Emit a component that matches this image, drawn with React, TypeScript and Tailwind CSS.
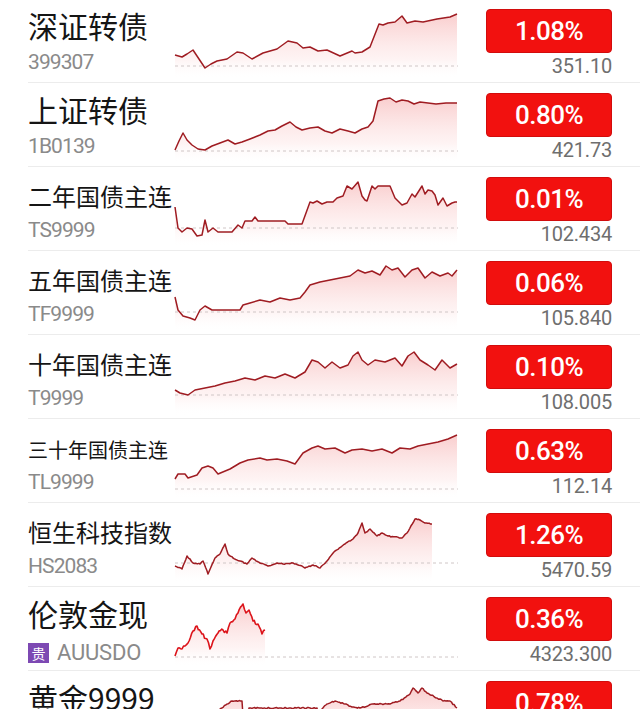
type Pt = [number, number]

interface Quote {
  name: string
  nameSize: string
  code: string
  tag?: string
  change: string
  price: string
  base: number
  pts: Pt[]
  jitter?: number
  bright?: boolean
}

// points: [absolute screen x, y offset from the row top]
const quotes: Quote[] = [
  {
    name: '深证转债', nameSize: 'text-[30px]', code: '399307', change: '1.08%', price: '351.10', base: 67,
    pts: [[175, 56], [182, 58], [187, 55], [193, 51], [199, 60], [205, 69], [211, 65], [217, 62], [227, 60], [237, 53], [243, 54], [252, 60], [263, 54], [277, 50], [288, 42], [297, 44], [303, 49], [310, 48], [318, 52], [327, 51], [340, 57], [352, 52], [355, 54], [362, 53], [370, 48], [379, 25], [383, 26], [388, 24], [395, 23], [402, 17], [407, 24], [415, 22], [423, 23], [437, 20], [450, 18], [457, 15]],
  },
  {
    name: '上证转债', nameSize: 'text-[30px]', code: '1B0139', change: '0.80%', price: '421.73', base: 68,
    pts: [[175, 67], [179, 58], [183, 50], [187, 57], [192, 62], [198, 66], [205, 67], [212, 63], [220, 60], [228, 57], [235, 61], [242, 59], [250, 56], [260, 52], [268, 48], [275, 47], [282, 43], [290, 39], [296, 44], [302, 47], [310, 45], [318, 44], [325, 48], [332, 50], [340, 46], [348, 48], [355, 50], [362, 46], [368, 44], [373, 38], [378, 18], [384, 16], [390, 15], [396, 19], [402, 17], [408, 18], [414, 21], [420, 19], [428, 20], [436, 21], [446, 20], [457, 20]],
  },
  {
    name: '二年国债主连', nameSize: 'text-[24px]', code: 'TS9999', change: '0.01%', price: '102.434', base: 61,
    pts: [[175, 40], [178, 61], [182, 65], [187, 61], [192, 62], [197, 69], [202, 68], [205, 53], [208, 65], [213, 61], [218, 65], [232, 65], [238, 58], [242, 61], [245, 54], [252, 54], [255, 50], [258, 54], [285, 54], [288, 57], [302, 57], [310, 35], [313, 36], [317, 34], [322, 37], [327, 35], [333, 35], [337, 31], [343, 29], [347, 19], [352, 22], [358, 15], [362, 29], [365, 33], [367, 34], [372, 19], [375, 22], [378, 19], [390, 19], [395, 31], [402, 38], [407, 36], [412, 27], [415, 30], [422, 19], [425, 27], [428, 23], [432, 24], [435, 28], [438, 38], [443, 31], [447, 39], [452, 36], [455, 35], [457, 35]],
  },
  {
    name: '五年国债主连', nameSize: 'text-[24px]', code: 'TF9999', change: '0.06%', price: '105.840', base: 61,
    pts: [[175, 46], [178, 59], [183, 65], [190, 67], [195, 69], [200, 59], [205, 55], [212, 59], [240, 59], [243, 54], [250, 52], [260, 49], [270, 51], [280, 47], [290, 49], [300, 47], [305, 41], [310, 34], [320, 31], [330, 29], [340, 27], [350, 25], [358, 19], [365, 22], [372, 20], [380, 24], [386, 15], [392, 19], [398, 17], [405, 26], [412, 19], [418, 17], [425, 27], [432, 21], [440, 25], [448, 22], [452, 25], [457, 19]],
  },
  {
    name: '十年国债主连', nameSize: 'text-[24px]', code: 'T9999', change: '0.10%', price: '108.005', base: 60,
    pts: [[175, 55], [180, 58], [188, 60], [195, 55], [205, 53], [215, 51], [225, 48], [235, 46], [245, 43], [255, 45], [265, 41], [275, 43], [285, 39], [295, 43], [305, 37], [312, 25], [318, 27], [325, 33], [332, 27], [340, 33], [348, 30], [353, 21], [358, 17], [362, 25], [368, 30], [375, 25], [385, 27], [395, 23], [402, 31], [408, 21], [414, 17], [420, 25], [428, 30], [435, 35], [442, 25], [450, 33], [457, 29]],
  },
  {
    name: '三十年国债主连', nameSize: 'text-[20px]', code: 'TL9999', change: '0.63%', price: '112.14', base: 70,
    pts: [[175, 60], [178, 55], [185, 55], [188, 59], [197, 56], [202, 49], [208, 47], [213, 49], [218, 55], [230, 50], [240, 44], [248, 41], [260, 39], [267, 41], [277, 40], [287, 42], [295, 45], [303, 34], [312, 29], [318, 27], [325, 30], [335, 29], [345, 34], [352, 31], [362, 30], [372, 32], [382, 30], [392, 34], [400, 29], [410, 30], [418, 27], [428, 25], [438, 23], [448, 20], [457, 16]],
  },
  {
    name: '恒生科技指数', nameSize: 'text-[24px]', code: 'HS2083', change: '1.26%', price: '5470.59', base: 60, jitter: 1,
    pts: [[175, 63], [182, 66], [187, 53], [193, 60], [200, 61], [203, 58], [208, 71], [215, 55], [220, 51], [225, 41], [228, 51], [233, 55], [240, 58], [247, 61], [252, 55], [260, 60], [268, 63], [277, 60], [283, 61], [293, 60], [302, 63], [305, 65], [313, 62], [320, 65], [327, 58], [335, 48], [345, 41], [353, 36], [358, 30], [362, 20], [365, 30], [370, 26], [377, 33], [382, 30], [388, 33], [402, 35], [407, 30], [415, 16], [420, 17], [425, 20], [432, 21]],
  },
  {
    name: '伦敦金现', nameSize: 'text-[30px]', code: 'AUUSDO', tag: '贵', change: '0.36%', price: '4323.300', base: 70, jitter: 3.5, bright: true,
    pts: [[175, 69], [178, 61], [182, 62], [185, 59], [188, 56], [193, 44], [197, 39], [202, 47], [207, 52], [210, 62], [213, 54], [218, 46], [223, 43], [227, 46], [230, 36], [235, 32], [238, 26], [243, 17], [246, 26], [249, 23], [253, 34], [258, 37], [262, 47], [265, 43]],
  },
  {
    name: '黄金9999', nameSize: 'text-[30px]', code: 'AU9999', change: '0.78%', price: '1021.50', base: 60, jitter: 1.2,
    pts: [[175, 55], [190, 50], [205, 46], [215, 42], [222, 37], [227, 33], [232, 30], [242, 30], [243, 45], [248, 45], [249, 37], [317, 37], [318, 44], [322, 38], [327, 33], [335, 30], [345, 33], [352, 36], [360, 37], [373, 33], [390, 33], [400, 30], [410, 23], [413, 17], [418, 22], [422, 17], [427, 22], [437, 27], [443, 30], [450, 30], [457, 37]],
  },
]

function densify(pts: Pt[], seed: number, amp: number): Pt[] {
  let s = seed
  const rnd = () => {
    s = (s * 9301 + 49297) % 233280
    return s / 233280
  }
  const out: Pt[] = []
  for (let i = 0; i < pts.length - 1; i++) {
    const [x0, y0] = pts[i]
    const [x1, y1] = pts[i + 1]
    const n = Math.max(1, Math.round((x1 - x0) / 1.4))
    for (let k = 0; k < n; k++) {
      const t = k / n
      const j = k === 0 ? 0 : (rnd() - 0.5) * amp
      out.push([x0 + (x1 - x0) * t, y0 + (y1 - y0) * t + j])
    }
  }
  out.push(pts[pts.length - 1])
  return out
}

function Spark({ q, idx }: { q: Quote; idx: number }) {
  const pts = q.jitter ? densify(q.pts, idx * 977 + 13, q.jitter) : q.pts
  const xy = pts.map(([x, y]) => [x - 174, y] as Pt)
  const line = xy.map(([x, y], i) => `${i ? 'L' : 'M'}${x.toFixed(1)} ${y.toFixed(1)}`).join(' ')
  const bottom = 80
  const area = `${line} L${xy[xy.length - 1][0].toFixed(1)} ${bottom} L${xy[0][0].toFixed(1)} ${bottom} Z`
  const minY = Math.min(...xy.map(p => p[1]))
  const gid = `fill-${idx}`
  return (
    <svg className="h-[84px] w-[284px] shrink-0" viewBox="0 0 284 84">
      <defs>
        <linearGradient id={gid} gradientUnits="userSpaceOnUse" x1="0" y1={minY} x2="0" y2={bottom}>
          <stop offset="0" stopColor="#ec5a5a" stopOpacity="0.3" />
          <stop offset="0.7" stopColor="#f6a0a0" stopOpacity="0.12" />
          <stop offset="1" stopColor="#ffffff" stopOpacity="0" />
        </linearGradient>
      </defs>
      <path d={area} fill={`url(#${gid})`} />
      <line x1="1" x2="284" y1={q.base} y2={q.base} stroke="#cfc6c6" strokeWidth="1" strokeDasharray="3 3" />
      <path
        d={line}
        fill="none"
        stroke={q.bright ? '#dc141b' : '#9f1c22'}
        strokeWidth={q.bright ? 1.6 : 1.5}
        strokeLinejoin="round"
      />
    </svg>
  )
}

function Row({ q, idx }: { q: Quote; idx: number }) {
  return (
    <div className={`ml-7 flex h-[84px] border-b border-[#ececec] pr-7 ${idx === 0 ? '-mt-px' : ''}`}>
      <div className="w-[146px] shrink-0">
        <div className="flex h-[41px] items-end">
          <span
            className={`${q.nameSize} whitespace-nowrap leading-none text-[#151515]`}
            style={{ fontFamily: '"Noto Sans CJK SC", sans-serif' }}
          >
            {q.name}
          </span>
        </div>
        <div className="mt-3 flex h-[21px] items-center gap-2">
          {q.tag && (
            <span
              className="mt-1 flex h-5 w-[21px] items-center justify-center bg-[#7d49b3] text-[14px] leading-none text-white"
              style={{ fontFamily: '"Noto Sans CJK SC", sans-serif' }}
            >
              {q.tag}
            </span>
          )}
          {q.tag ? (
            <span className="mt-1 font-['Roboto',sans-serif] text-[22px] leading-none tracking-[-0.2px] text-[#8a8a8a]">
              {q.code}
            </span>
          ) : (
            <span className="font-['Roboto',sans-serif] text-[21px] leading-none tracking-[-0.9px] text-[#8a8a8a]">
              {q.code}
            </span>
          )}
        </div>
      </div>
      <Spark q={q} idx={idx} />
      <div className="ml-7 flex w-[126px] shrink-0 flex-col items-end pt-[10px]">
        <div className="flex h-[44px] w-full items-center justify-center rounded-[4px] border border-[#d20c0c] bg-[#f2110f]">
          <span className="font-['Roboto',sans-serif] text-[26px] font-medium leading-none tracking-[-0.5px] text-white">
            {q.change}
          </span>
        </div>
        <span className="mt-[3px] font-['Roboto',sans-serif] text-[20px] leading-5 tracking-[-0.2px] text-[#6e6e6e]">
          {q.price}
        </span>
      </div>
    </div>
  )
}

export default function App() {
  return (
    <div className="h-[709px] w-[640px] overflow-hidden bg-white">
      {quotes.map((q, i) => (
        <Row key={q.code} q={q} idx={i} />
      ))}
    </div>
  )
}
